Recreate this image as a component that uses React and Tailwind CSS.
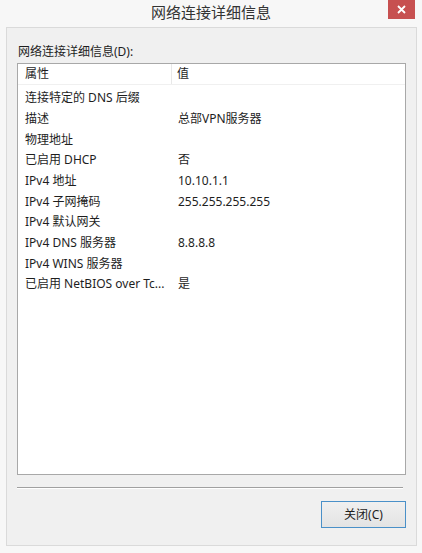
import React from "react";

const rows = [
  ["连接特定的 DNS 后缀", ""],
  ["描述", "总部VPN服务器"],
  ["物理地址", ""],
  ["已启用 DHCP", "否"],
  ["IPv4 地址", "10.10.1.1"],
  ["IPv4 子网掩码", "255.255.255.255"],
  ["IPv4 默认网关", ""],
  ["IPv4 DNS 服务器", "8.8.8.8"],
  ["IPv4 WINS 服务器", ""],
  ["已启用 NetBIOS over Tc...", "是"],
];

const font = { fontFamily: '"Noto Sans", "Noto Sans CJK SC", sans-serif' };

export default function App() {
  return (
    <div
      className="w-[422px] h-[553px] bg-[#f7f7f7] flex flex-col text-[#1e1e1e] overflow-hidden"
      style={font}
    >
      {/* title bar */}
      <div className="h-[27px] relative flex items-center justify-center">
        <span className="text-[15px] text-[#333] mt-[-2px]">网络连接详细信息</span>
        <div className="absolute right-[7px] top-0 w-[27px] h-[19px] bg-[#c75050] flex items-center justify-center">
          <svg width="9" height="9" viewBox="0 0 9 9">
            <path d="M1 1 L8 8 M8 1 L1 8" stroke="#fff" strokeWidth="1.8" />
          </svg>
        </div>
      </div>

      {/* body */}
      <div className="mx-[6px] mr-[5px] h-[519px] border border-[#dadada] bg-[#f0f0f0] flex flex-col px-[10px]">
        <div className="text-[12px] mt-[16px] leading-[16px] pl-[1px]">网络连接详细信息(D):</div>
        <div className="mt-[3px] h-[412px] w-[389px] border border-[#a8a8a8] bg-white flex flex-col">
          <div className="flex h-[21px] border-b border-[#f0f0f0] text-[12px] items-center">
            <div className="w-[154px] pl-[7px] border-r border-[#e8e8e8] h-full flex items-center">属性</div>
            <div className="pl-[5px]">值</div>
          </div>
          <div className="pt-[3px]">
            {rows.map(([k, v], i) => (
              <div key={i} className="flex h-[20.67px] items-center text-[12px]">
                <div className="w-[154px] pl-[7px] whitespace-nowrap overflow-hidden">{k}</div>
                <div className="pl-[6px]">{v}</div>
              </div>
            ))}
          </div>
        </div>
        <div className="mt-[12px] h-0 w-[386px] border-t border-[#a0a0a0] border-b-white border-b"></div>
        <div className="flex justify-end mt-[12px]">
          <button className="w-[85px] h-[27px] border border-[#4a90c8] bg-gradient-to-b from-[#f0f0f0] to-[#e3e3e3] text-[12px] flex items-center justify-center">
            关闭(C)
          </button>
        </div>
      </div>
    </div>
  );
}
